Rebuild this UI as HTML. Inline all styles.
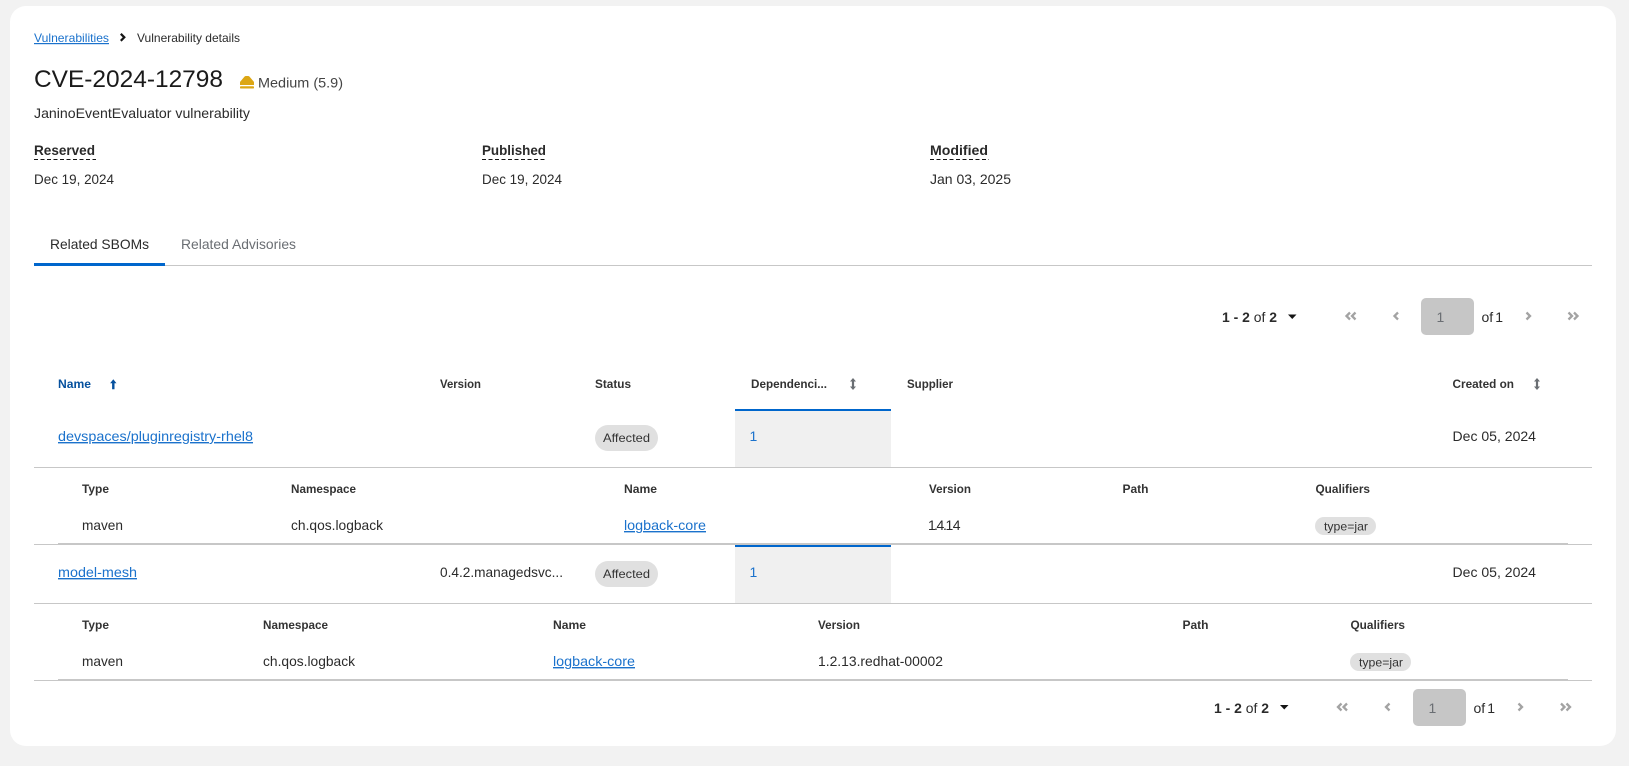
<!DOCTYPE html>
<html lang="en">
<head>
<meta charset="utf-8">
<title>CVE-2024-12798</title>
<style>
html,body{margin:0;padding:0;width:1629px;height:766px;overflow:hidden;background:#f2f2f2}
svg{display:block}
text{font-family:"Liberation Sans",sans-serif;fill:#2b2b2b;font-size:14px;white-space:pre}
.sm{font-size:12px}
.th{font-size:11.5px;font-weight:bold;fill:#333}
.lbl{font-weight:bold;font-size:14px;fill:#2a2a2a}
.link{fill:#1b72cc;text-decoration:underline}
.ic{fill:none;stroke:#a3a3a3;stroke-width:2.300}
</style>
</head>
<body>
<svg width="1629" height="766" viewBox="0 0 1629 766" xmlns="http://www.w3.org/2000/svg">
<rect x="10" y="6" width="1606" height="740" rx="16" fill="#fff"/>

<!-- breadcrumb -->
<text x="34" y="42" class="sm link" textLength="75" lengthAdjust="spacingAndGlyphs">Vulnerabilities</text>
<path d="M120.800 33.800l3.500 3.500-3.500 3.500" fill="none" stroke="#151515" stroke-width="2.200"/>
<text x="137" y="42" class="sm" textLength="103" lengthAdjust="spacingAndGlyphs">Vulnerability details</text>

<!-- title -->
<text x="34" y="87" style="font-size:24px;fill:#1a1a1a" textLength="189" lengthAdjust="spacingAndGlyphs">CVE-2024-12798</text>
<path d="M240 85V82.500c0-.6.3-1.100.8-1.500L244.500 76.600c.4-.4.9-.6 1.500-.6h2c.6 0 1.100.2 1.500.6L253.200 81c.5.4.8.9.8 1.500V85z" fill="#dca614"/>
<rect x="240" y="86.200" width="14" height="2.300" rx=".8" fill="#dca614"/>
<text x="258" y="87.500" style="fill:#444" textLength="85" lengthAdjust="spacingAndGlyphs">Medium (5.9)</text>
<text x="34" y="118" textLength="216" lengthAdjust="spacingAndGlyphs">JaninoEventEvaluator vulnerability</text>

<!-- meta -->
<text x="34" y="155" class="lbl" textLength="61" lengthAdjust="spacingAndGlyphs">Reserved</text>
<text x="482" y="155" class="lbl" textLength="64" lengthAdjust="spacingAndGlyphs">Published</text>
<text x="930" y="155" class="lbl" textLength="58" lengthAdjust="spacingAndGlyphs">Modified</text>
<g stroke="#151515" stroke-dasharray="4 2.500" stroke-width="1">
<line x1="34" y1="159.500" x2="96" y2="159.500"/>
<line x1="482" y1="159.500" x2="547" y2="159.500"/>
<line x1="930" y1="159.500" x2="989" y2="159.500"/>
</g>
<text x="34" y="184" textLength="80" lengthAdjust="spacingAndGlyphs">Dec 19, 2024</text>
<text x="482" y="184" textLength="80" lengthAdjust="spacingAndGlyphs">Dec 19, 2024</text>
<text x="930" y="184" textLength="81" lengthAdjust="spacingAndGlyphs">Jan 03, 2025</text>

<!-- tabs -->
<text x="50" y="249" textLength="99" lengthAdjust="spacingAndGlyphs">Related SBOMs</text>
<text x="181" y="249" style="fill:#6a6e73" textLength="115" lengthAdjust="spacingAndGlyphs">Related Advisories</text>
<rect x="34" y="265" width="1558" height="1" fill="#c7c7c7"/>
<rect x="34" y="263" width="131" height="3" fill="#0066cc"/>

<!-- top pagination -->
<text x="1222" y="322" textLength="55" lengthAdjust="spacingAndGlyphs"><tspan font-weight="bold">1 - 2</tspan> of <tspan font-weight="bold">2</tspan></text>
<path d="M1288 314.500h8.500l-4.250 4.500z" fill="#151515"/>
<path class="ic" d="M1350 312.500l-3.500 3.500 3.500 3.500M1355.500 312.500l-3.500 3.500 3.500 3.500"/>
<path class="ic" d="M1398 312.500l-3.500 3.500 3.500 3.500"/>
<rect x="1421" y="298" width="53" height="37" rx="5" fill="#c6c6c6"/>
<text x="1436.500" y="322" style="fill:#6a6e73">1</text>
<text x="1481.500" y="322">of</text><text x="1495.300" y="322">1</text>
<path class="ic" d="M1526.500 312.500l3.500 3.500-3.500 3.500"/>
<path class="ic" d="M1568.500 312.500l3.500 3.500-3.500 3.500M1574 312.500l3.500 3.500-3.500 3.500"/>

<!-- table header -->
<text x="58" y="388" class="th" style="fill:#06519e" textLength="33" lengthAdjust="spacingAndGlyphs">Name</text>
<path d="M113.300 379.300l3.200 4h-2v6h-2.400v-6h-2z" fill="#06519e"/>
<text x="440" y="388" class="th" textLength="41" lengthAdjust="spacingAndGlyphs">Version</text>
<text x="595" y="388" class="th" textLength="36" lengthAdjust="spacingAndGlyphs">Status</text>
<text x="751" y="388" class="th" textLength="76" lengthAdjust="spacingAndGlyphs">Dependenci...</text>
<path d="M853 378l3 3.500h-1.900v5h1.900l-3 3.500-3-3.500h1.900v-5h-1.900z" fill="#6a6e73"/>
<text x="907" y="388" class="th" textLength="46" lengthAdjust="spacingAndGlyphs">Supplier</text>
<text x="1452.500" y="388" class="th" textLength="61.500" lengthAdjust="spacingAndGlyphs">Created on</text>
<path d="M1537 378l3 3.500h-1.900v5h1.900l-3 3.500-3-3.500h1.900v-5h-1.900z" fill="#6a6e73"/>

<!-- row 1 -->
<rect x="735" y="409" width="156" height="58" fill="#f0f0f0"/>
<rect x="735" y="409" width="156" height="2" fill="#0066cc"/>
<text x="58" y="441" class="link" textLength="195" lengthAdjust="spacingAndGlyphs">devspaces/pluginregistry-rhel8</text>
<rect x="595" y="425" width="63" height="26" rx="13" fill="#e0e0e0"/>
<text x="603" y="442" class="sm" style="fill:#333" textLength="47" lengthAdjust="spacingAndGlyphs">Affected</text>
<text x="749.500" y="441" style="fill:#1b72cc">1</text>
<text x="1452.500" y="441" textLength="83.500" lengthAdjust="spacingAndGlyphs">Dec 05, 2024</text>
<rect x="34" y="467" width="1558" height="1" fill="#c7c7c7"/>

<!-- nested 1 -->
<text x="82" y="493" class="th" textLength="27" lengthAdjust="spacingAndGlyphs">Type</text>
<text x="291" y="493" class="th" textLength="65" lengthAdjust="spacingAndGlyphs">Namespace</text>
<text x="624" y="493" class="th" textLength="33" lengthAdjust="spacingAndGlyphs">Name</text>
<text x="929" y="493" class="th" textLength="42" lengthAdjust="spacingAndGlyphs">Version</text>
<text x="1122.500" y="493" class="th" textLength="26" lengthAdjust="spacingAndGlyphs">Path</text>
<text x="1315.500" y="493" class="th" textLength="54.500" lengthAdjust="spacingAndGlyphs">Qualifiers</text>
<text x="82" y="530" textLength="41" lengthAdjust="spacingAndGlyphs">maven</text>
<text x="291" y="530" textLength="92" lengthAdjust="spacingAndGlyphs">ch.qos.logback</text>
<text x="624" y="530" class="link" textLength="82" lengthAdjust="spacingAndGlyphs">logback-core</text>
<text x="928 934 936.500 943 945.500 952.800" y="530">1.4.14</text>
<rect x="1315" y="517" width="61" height="18" rx="9" fill="#e0e0e0"/>
<text x="1324" y="530.500" class="sm" style="fill:#333" textLength="44" lengthAdjust="spacingAndGlyphs">type=jar</text>
<rect x="34" y="544" width="1558" height="1" fill="#c7c7c7"/>
<rect x="58" y="543" width="1510" height="2" fill="#c7c7c7"/>

<!-- row 2 -->
<rect x="735" y="545" width="156" height="58" fill="#f0f0f0"/>
<rect x="735" y="545" width="156" height="2" fill="#0066cc"/>
<text x="58" y="577" class="link" textLength="79" lengthAdjust="spacingAndGlyphs">model-mesh</text>
<text x="440" y="577" textLength="123" lengthAdjust="spacingAndGlyphs">0.4.2.managedsvc...</text>
<rect x="595" y="561" width="63" height="26" rx="13" fill="#e0e0e0"/>
<text x="603" y="578" class="sm" style="fill:#333" textLength="47" lengthAdjust="spacingAndGlyphs">Affected</text>
<text x="749.500" y="577" style="fill:#1b72cc">1</text>
<text x="1452.500" y="577" textLength="83.500" lengthAdjust="spacingAndGlyphs">Dec 05, 2024</text>
<rect x="34" y="603" width="1558" height="1" fill="#c7c7c7"/>

<!-- nested 2 -->
<text x="82" y="629" class="th" textLength="27" lengthAdjust="spacingAndGlyphs">Type</text>
<text x="263" y="629" class="th" textLength="65" lengthAdjust="spacingAndGlyphs">Namespace</text>
<text x="553" y="629" class="th" textLength="33" lengthAdjust="spacingAndGlyphs">Name</text>
<text x="818" y="629" class="th" textLength="42" lengthAdjust="spacingAndGlyphs">Version</text>
<text x="1182.500" y="629" class="th" textLength="26" lengthAdjust="spacingAndGlyphs">Path</text>
<text x="1350.500" y="629" class="th" textLength="54.500" lengthAdjust="spacingAndGlyphs">Qualifiers</text>
<text x="82" y="666" textLength="41" lengthAdjust="spacingAndGlyphs">maven</text>
<text x="263" y="666" textLength="92" lengthAdjust="spacingAndGlyphs">ch.qos.logback</text>
<text x="553" y="666" class="link" textLength="82" lengthAdjust="spacingAndGlyphs">logback-core</text>
<text x="818" y="666" textLength="125" lengthAdjust="spacingAndGlyphs">1.2.13.redhat-00002</text>
<rect x="1350" y="653" width="61" height="18" rx="9" fill="#e0e0e0"/>
<text x="1359" y="666.500" class="sm" style="fill:#333" textLength="44" lengthAdjust="spacingAndGlyphs">type=jar</text>
<rect x="34" y="680" width="1558" height="1" fill="#c7c7c7"/>
<rect x="58" y="679" width="1510" height="2" fill="#c7c7c7"/>

<!-- bottom pagination -->
<text x="1214" y="713" textLength="55" lengthAdjust="spacingAndGlyphs"><tspan font-weight="bold">1 - 2</tspan> of <tspan font-weight="bold">2</tspan></text>
<path d="M1280 705h8.500l-4.250 4.500z" fill="#151515"/>
<path class="ic" d="M1341.500 703.500l-3.500 3.500 3.500 3.500M1347 703.500l-3.500 3.500 3.500 3.500"/>
<path class="ic" d="M1389.500 703.500l-3.500 3.500 3.500 3.500"/>
<rect x="1413" y="689" width="53" height="37" rx="5" fill="#c6c6c6"/>
<text x="1428.500" y="713" style="fill:#6a6e73">1</text>
<text x="1473.500" y="713">of</text><text x="1487.300" y="713">1</text>
<path class="ic" d="M1518.500 703.500l3.500 3.500-3.500 3.500"/>
<path class="ic" d="M1561 703.500l3.500 3.500-3.500 3.500M1566.500 703.500l3.500 3.500-3.500 3.500"/>
</svg>
</body>
</html>
